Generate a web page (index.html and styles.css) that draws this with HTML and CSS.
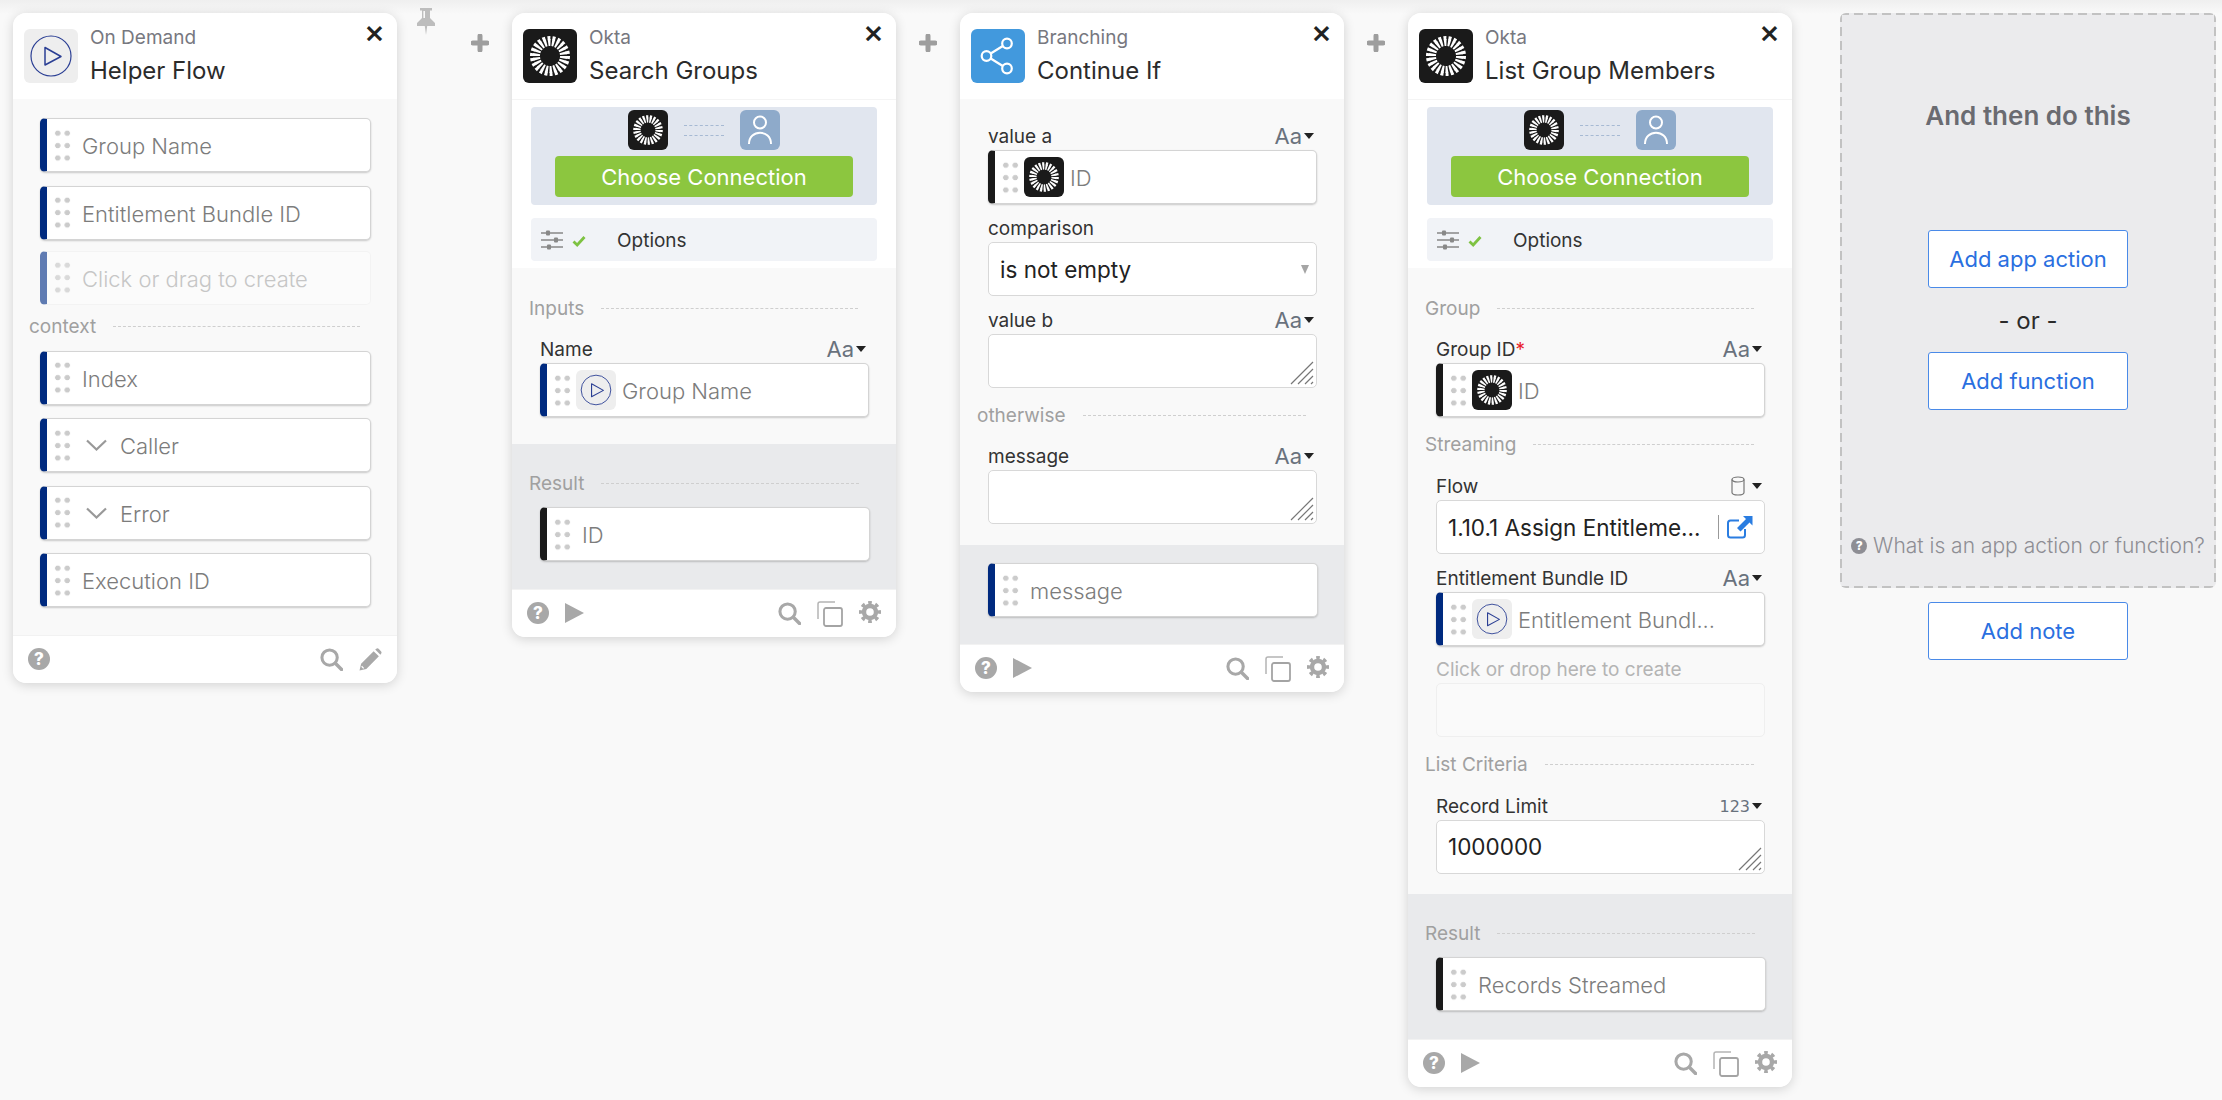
FILE: index.html
```html
<!DOCTYPE html>
<html lang="en">
<head>
  <meta charset="UTF-8">
  <meta name="viewport" content="width=device-width, initial-scale=1.0">
  <title>Helper Flow</title>
  <link rel="stylesheet" href="styles.css">
</head>
<body>
  <svg class="defs" xmlns="http://www.w3.org/2000/svg">
    <symbol id="i-play" viewBox="0 0 54 54">
      <circle cx="27" cy="27" r="20" fill="none" stroke="#2b3f94" stroke-width="1.2"/>
      <path d="M21 18.5 L37 27.5 L21 36 Z" fill="none" stroke="#2b3f94" stroke-width="1.5" stroke-linejoin="round"/>
    </symbol>
    <symbol id="i-okta" viewBox="0 0 54 54">
      <circle cx="27" cy="27" r="13.5" fill="none" stroke="#fff" stroke-width="7" pathLength="44" stroke-dasharray="1.25 .75"/>
      <circle cx="27" cy="27" r="18" fill="none" stroke="#fff" stroke-width="4" pathLength="44" stroke-dasharray="1.15 .85"/>
    </symbol>
    <symbol id="i-share" viewBox="0 0 54 54">
      <g fill="none" stroke="#fff" stroke-width="2.2">
        <circle cx="36" cy="14.5" r="4.8"/>
        <circle cx="15.5" cy="27" r="4.8"/>
        <circle cx="36" cy="39.5" r="4.8"/>
        <path d="M19.7 24.5 L31.8 17 M19.7 29.5 L31.8 37"/>
      </g>
    </symbol>
    <symbol id="i-person" viewBox="0 0 40 40">
      <g fill="none" stroke="#fff" stroke-width="2">
        <circle cx="20" cy="12.5" r="6"/>
        <path d="M9 34 C9 19 31 19 31 34"/>
      </g>
    </symbol>
    <symbol id="i-sliders" viewBox="0 0 22 20">
      <g stroke="#888" stroke-width="1.4">
        <path d="M0 3 H22 M0 10 H22 M0 17 H22"/>
      </g>
      <g fill="#888">
        <rect x="5" y="0.5" width="4" height="5" rx="1"/>
        <rect x="13" y="7.5" width="4" height="5" rx="1"/>
        <rect x="6" y="14.5" width="4" height="5" rx="1"/>
      </g>
    </symbol>
    <symbol id="i-check" viewBox="0 0 14 12">
      <path d="M1.5 6.5 L5.2 10 L12.5 2" fill="none" stroke="#7ec242" stroke-width="2.8"/>
    </symbol>
    <symbol id="i-search" viewBox="0 0 24 24">
      <circle cx="10" cy="10" r="8" fill="none" stroke="#a8a8a8" stroke-width="3.2"/>
      <path d="M16 16 L22.5 22.5" stroke="#a8a8a8" stroke-width="3.6" stroke-linecap="round"/>
    </symbol>
    <symbol id="i-pencil" viewBox="0 0 22 22">
      <path d="M0.5 21.5 L2 15 L14 3 L19 8 L7 20 Z M15.5 1.5 L17 0.5 Q18 0 19 1 L21 3 Q22 4 21.4 5 L20.5 6.5 Z" fill="#a8a8a8"/>
      <path d="M2.5 17.5 L4.5 19.5" stroke="#fff" stroke-width="1.2"/>
    </symbol>
    <symbol id="i-copy" viewBox="0 0 26 26">
      <path d="M18 1 H3 Q1 1 1 3 V18" fill="none" stroke="#b4b4b4" stroke-width="1.5"/>
      <rect x="7" y="7" width="18" height="18" rx="2" fill="none" stroke="#a4a4a4" stroke-width="1.8"/>
    </symbol>
    <symbol id="i-gear" viewBox="0 0 22 22">
      <circle cx="11" cy="11" r="6" fill="none" stroke="#a8a8a8" stroke-width="4.4"/>
      <circle cx="11" cy="11" r="9.2" fill="none" stroke="#a8a8a8" stroke-width="3.6" pathLength="16" stroke-dasharray="1 1" stroke-dashoffset=".5"/>
    </symbol>
    <symbol id="i-grip" viewBox="0 0 25 25">
      <g stroke="#777" stroke-width="1.2">
        <path d="M24 2 L2 24 M24 9 L9 24 M24 16 L16 24 M24 22 L22 24"/>
      </g>
    </symbol>
    <symbol id="i-link" viewBox="0 0 26 24">
      <path d="M18 14 V20 Q18 22.5 15.5 22.5 H3.5 Q1 22.5 1 20 V8 Q1 5.5 3.5 5.5 H12" fill="none" stroke="#2a7de1" stroke-width="2"/>
      <path d="M16 1 H25.5 V10.5 L22.5 7.5 L13.5 16.5 L10 13 L19 4 Z" fill="#2a7de1"/>
    </symbol>
    <symbol id="i-db" viewBox="0 0 14 20">
      <g fill="none" stroke="#777" stroke-width="1.2">
        <ellipse cx="7" cy="3.5" rx="6" ry="2.5"/>
        <path d="M1 3.5 V16.5 C1 18 3 19 7 19 C11 19 13 18 13 16.5 V3.5"/>
      </g>
    </symbol>
    <symbol id="i-pin" viewBox="0 0 18 27">
      <path d="M3 0 H15 V2.5 H13 V10 L18 15 V18 H10.2 L9 27 L7.8 18 H0 V15 L5 10 V2.5 H3 Z M6.4 3 V10 H8 V3 Z" fill="#bdbdbd" fill-rule="evenodd"/>
    </symbol>
    <symbol id="i-plus" viewBox="0 0 18 18">
      <path d="M9 2 V16 M2 9 H16" stroke="#9e9e9e" stroke-width="5" stroke-linecap="round"/>
    </symbol>
    <symbol id="i-chevron" viewBox="0 0 21 12">
      <path d="M1 1.5 L10.5 10.5 L20 1.5" fill="none" stroke="#999" stroke-width="2.2"/>
    </symbol>
  </svg>

  <div class="canvas">

    <!-- helper flow start card -->
    <section class="card">
      <header class="card-head">
        <span class="app-icon icon-grey"><svg><use href="#i-play"/></svg></span>
        <div class="card-title">
          <div class="app-name">On Demand</div>
          <div class="action-name">Helper Flow</div>
        </div>
        <span class="close">&times;</span>
      </header>
      <div class="card-body body-start">
        <div class="token stripe-blue"><span class="dots"></span><span class="token-name">Group Name</span></div>
        <div class="token stripe-blue"><span class="dots"></span><span class="token-name">Entitlement Bundle ID</span></div>
        <div class="token token-new"><span class="dots"></span><span class="token-name">Click or drag to create</span></div>
        <div class="section-row row-context"><span>context</span></div>
        <div class="token stripe-blue"><span class="dots"></span><span class="token-name">Index</span></div>
        <div class="token stripe-blue"><span class="dots"></span><svg class="chevron"><use href="#i-chevron"/></svg><span class="token-name">Caller</span></div>
        <div class="token stripe-blue"><span class="dots"></span><svg class="chevron"><use href="#i-chevron"/></svg><span class="token-name">Error</span></div>
        <div class="token stripe-blue"><span class="dots"></span><span class="token-name">Execution ID</span></div>
      </div>
      <footer class="card-foot">
        <span class="help">?</span>
        <span class="spacer"></span>
        <svg class="foot-icon"><use href="#i-search"/></svg>
        <svg class="foot-icon"><use href="#i-pencil"/></svg>
      </footer>
    </section>

    <div class="pin-col"><svg class="pin"><use href="#i-pin"/></svg></div>
    <div class="gutter"><svg class="plus"><use href="#i-plus"/></svg></div>

    <!-- search groups -->
    <section class="card">
      <header class="card-head">
        <span class="app-icon icon-black"><svg><use href="#i-okta"/></svg></span>
        <div class="card-title">
          <div class="app-name">Okta</div>
          <div class="action-name">Search Groups</div>
        </div>
        <span class="close">&times;</span>
      </header>
      <div class="conn-section">
        <div class="conn-box">
          <div class="conn-icons">
            <span class="app-icon small icon-black"><svg><use href="#i-okta"/></svg></span>
            <span class="conn-dash"></span>
            <span class="app-icon small icon-person"><svg><use href="#i-person"/></svg></span>
          </div>
          <button class="conn-btn">Choose Connection</button>
        </div>
        <div class="options">
          <svg class="sliders"><use href="#i-sliders"/></svg>
          <svg class="check"><use href="#i-check"/></svg>
          <span>Options</span>
        </div>
      </div>
      <div class="card-body">
        <div class="section-row first"><span>Inputs</span></div>
        <div class="field">
          <div class="field-label"><span>Name</span><span class="type">Aa</span></div>
          <div class="token stripe-blue"><span class="dots"></span><span class="app-icon small icon-grey"><svg><use href="#i-play"/></svg></span><span class="token-name">Group Name</span></div>
        </div>
      </div>
      <div class="card-result">
        <div class="section-row"><span>Result</span></div>
        <div class="token stripe-black"><span class="dots"></span><span class="token-name">ID</span></div>
      </div>
      <footer class="card-foot">
        <span class="help">?</span>
        <span class="run"></span>
        <span class="spacer"></span>
        <svg class="foot-icon"><use href="#i-search"/></svg>
        <svg class="foot-icon copy"><use href="#i-copy"/></svg>
        <svg class="foot-icon gear"><use href="#i-gear"/></svg>
      </footer>
    </section>

    <div class="gutter"><svg class="plus"><use href="#i-plus"/></svg></div>

    <!-- continue if -->
    <section class="card">
      <header class="card-head">
        <span class="app-icon icon-blue"><svg><use href="#i-share"/></svg></span>
        <div class="card-title">
          <div class="app-name">Branching</div>
          <div class="action-name">Continue If</div>
        </div>
        <span class="close">&times;</span>
      </header>
      <div class="card-body body-branch">
        <div class="field">
          <div class="field-label"><span>value a</span><span class="type">Aa</span></div>
          <div class="token stripe-black"><span class="dots"></span><span class="app-icon small icon-black"><svg><use href="#i-okta"/></svg></span><span class="token-name">ID</span></div>
        </div>
        <div class="field">
          <div class="field-label"><span>comparison</span></div>
          <div class="control select"><span>is not empty</span><span class="select-arrow"></span></div>
        </div>
        <div class="field">
          <div class="field-label"><span>value b</span><span class="type">Aa</span></div>
          <div class="control"><svg class="resize"><use href="#i-grip"/></svg></div>
        </div>
        <div class="section-row"><span>otherwise</span></div>
        <div class="field">
          <div class="field-label"><span>message</span><span class="type">Aa</span></div>
          <div class="control"><svg class="resize"><use href="#i-grip"/></svg></div>
        </div>
      </div>
      <div class="card-result result-plain">
        <div class="token stripe-blue"><span class="dots"></span><span class="token-name">message</span></div>
      </div>
      <footer class="card-foot">
        <span class="help">?</span>
        <span class="run"></span>
        <span class="spacer"></span>
        <svg class="foot-icon"><use href="#i-search"/></svg>
        <svg class="foot-icon copy"><use href="#i-copy"/></svg>
        <svg class="foot-icon gear"><use href="#i-gear"/></svg>
      </footer>
    </section>

    <div class="gutter"><svg class="plus"><use href="#i-plus"/></svg></div>

    <!-- list group members -->
    <section class="card">
      <header class="card-head">
        <span class="app-icon icon-black"><svg><use href="#i-okta"/></svg></span>
        <div class="card-title">
          <div class="app-name">Okta</div>
          <div class="action-name">List Group Members</div>
        </div>
        <span class="close">&times;</span>
      </header>
      <div class="conn-section">
        <div class="conn-box">
          <div class="conn-icons">
            <span class="app-icon small icon-black"><svg><use href="#i-okta"/></svg></span>
            <span class="conn-dash"></span>
            <span class="app-icon small icon-person"><svg><use href="#i-person"/></svg></span>
          </div>
          <button class="conn-btn">Choose Connection</button>
        </div>
        <div class="options">
          <svg class="sliders"><use href="#i-sliders"/></svg>
          <svg class="check"><use href="#i-check"/></svg>
          <span>Options</span>
        </div>
      </div>
      <div class="card-body body-list">
        <div class="section-row first"><span>Group</span></div>
        <div class="field">
          <div class="field-label"><span>Group ID<b class="req">*</b></span><span class="type">Aa</span></div>
          <div class="token stripe-black"><span class="dots"></span><span class="app-icon small icon-black"><svg><use href="#i-okta"/></svg></span><span class="token-name">ID</span></div>
        </div>
        <div class="section-row"><span>Streaming</span></div>
        <div class="field">
          <div class="field-label"><span>Flow</span><span class="type"><svg class="db"><use href="#i-db"/></svg></span></div>
          <div class="control flow-input">
            <span class="flow-name">1.10.1 Assign Entitleme...</span>
            <svg class="ext-link"><use href="#i-link"/></svg>
          </div>
        </div>
        <div class="field">
          <div class="field-label"><span>Entitlement Bundle ID</span><span class="type">Aa</span></div>
          <div class="token stripe-blue"><span class="dots"></span><span class="app-icon small icon-grey"><svg><use href="#i-play"/></svg></span><span class="token-name">Entitlement Bundl...</span></div>
        </div>
        <div class="field field-new">
          <div class="field-label label-faded"><span>Click or drop here to create</span></div>
          <div class="control control-faded"></div>
        </div>
        <div class="section-row"><span>List Criteria</span></div>
        <div class="field">
          <div class="field-label"><span>Record Limit</span><span class="type type-num">123</span></div>
          <div class="control value">1000000<svg class="resize"><use href="#i-grip"/></svg></div>
        </div>
      </div>
      <div class="card-result">
        <div class="section-row"><span>Result</span></div>
        <div class="token stripe-black"><span class="dots"></span><span class="token-name">Records Streamed</span></div>
      </div>
      <footer class="card-foot">
        <span class="help">?</span>
        <span class="run"></span>
        <span class="spacer"></span>
        <svg class="foot-icon"><use href="#i-search"/></svg>
        <svg class="foot-icon copy"><use href="#i-copy"/></svg>
        <svg class="foot-icon gear"><use href="#i-gear"/></svg>
      </footer>
    </section>

    <!-- add next step -->
    <aside class="next-col">
      <div class="next-panel">
        <h2>And then do this</h2>
        <button class="add-btn">Add app action</button>
        <div class="or">- or -</div>
        <button class="add-btn">Add function</button>
        <div class="what"><span class="help help-small">?</span>What is an app action or function?</div>
      </div>
      <button class="add-btn">Add note</button>
    </aside>
  </div>
</body>
</html>
```

FILE: styles.css
```css
body {
  font-family: Inter, "Noto Sans", sans-serif;
  margin: 0;
  padding: 0;
  background: #f9f9f9;
  color: #333;
}

.defs {
  display: none;
}

.canvas {
  display: flex;
  align-items: flex-start;
  height: 1100px;
  box-sizing: border-box;
  padding: 13px 0 0 13px;
  background: linear-gradient(#efefef, #f9f9f9 14px);
}

.card {
  width: 384px;
  flex-shrink: 0;
  background: #f9f9f9;
  border-radius: 13px;
  box-shadow: 0 2px 12px rgba(0, 0, 0, 0.16);
  overflow: hidden;
}

.card-head {
  display: flex;
  height: 86px;
  box-sizing: border-box;
  padding: 16px 0 0 11px;
  background: #fff;
  position: relative;
}

.app-icon {
  display: block;
  width: 54px;
  height: 54px;
  flex-shrink: 0;
  border-radius: 6px;
}

.app-icon svg {
  display: block;
  width: 100%;
  height: 100%;
}

.app-icon.small {
  width: 40px;
  height: 40px;
  border-radius: 6px;
}

.icon-grey { background: #eee; }
.icon-black { background: #1a1a1a; }
.icon-blue { background: #4299dd; }
.icon-person { background: #8eaaca; }

.card-title {
  margin-left: 12px;
}

.app-name {
  font-size: 19px;
  line-height: 22px;
  margin-top: -2px;
  color: #77787f;
}

.action-name {
  font-size: 24px;
  line-height: 30px;
  margin-top: 7px;
  color: #2b2b2b;
}

.close {
  position: absolute;
  top: 5px;
  right: 12px;
  font-size: 32px;
  line-height: 28px;
  font-weight: 500;
  color: #222;
}

.conn-section {
  background: #fff;
  border-top: 1px solid #f4f4f4;
  padding: 7px 19px 7px;
  height: 169px;
  box-sizing: border-box;
}

.conn-box {
  background: #e1e6ef;
  border-radius: 4px;
  height: 98px;
  box-sizing: border-box;
  padding-top: 3px;
  display: flex;
  flex-direction: column;
  align-items: center;
}

.conn-icons {
  display: flex;
  align-items: center;
  gap: 16px;
}

.conn-dash {
  width: 40px;
  height: 9px;
  border-top: 1px dashed #a6b9d3;
  border-bottom: 1px dashed #a6b9d3;
}

.conn-btn {
  margin-top: 6px;
  width: 298px;
  height: 41px;
  border: none;
  border-radius: 4px;
  background: #8cc63f;
  color: #fff;
  font-family: inherit;
  font-size: 22px;
  padding: 0;
}

.options {
  display: flex;
  align-items: center;
  height: 43px;
  margin-top: 13px;
  border-radius: 4px;
  background: #f1f3f7;
  padding-left: 10px;
  font-size: 19px;
}

.options span {
  padding-top: 2px;
}

.sliders {
  width: 22px;
  height: 20px;
}

.check {
  width: 14px;
  height: 12px;
  margin: 2px 31px 0 9px;
}

.card-body {
  padding: 0 27px 27px 28px;
}

.body-start {
  padding: 19px 26px 28px 27px;
}

.body-start .token + .token {
  margin-top: 13.5px;
}

.body-start .token + .token-new {
  margin-top: 11px;
}

.body-branch {
  padding-top: 13px;
  padding-bottom: 21px;
}

.body-list {
  padding-bottom: 20px;
}

.body-list .section-row:not(.first) {
  margin-bottom: 6px;
}

.field-new {
  margin-top: -1px;
}

.section-row {
  display: flex;
  align-items: center;
  gap: 17px;
  height: 24px;
  margin: 15px 11px 5px -11px;
  font-size: 19px;
  color: #a0a0a0;
}

.section-row::after {
  content: "";
  flex: 1;
  border-top: 1px dashed #cfcfcf;
}

.section-row.first {
  margin-top: 28px;
}

.row-context {
  margin-top: 10px;
  margin-bottom: 12px;
}

.field-label {
  display: flex;
  justify-content: space-between;
  align-items: center;
  height: 24px;
  padding: 12px 3px 2px 0;
  font-size: 19px;
  color: #333;
}

.req {
  color: #e8202a;
  font-weight: 400;
}

.label-faded {
  color: #b4b4b4;
}

.type {
  display: flex;
  align-items: center;
  font-size: 22px;
  color: #69727d;
}

.type::after {
  content: "";
  margin-left: 2px;
  border-left: 5px solid transparent;
  border-right: 5px solid transparent;
  border-top: 6px solid #222;
}

.type-num {
  font-family: "DejaVu Sans", sans-serif;
  font-size: 16px;
}

.db {
  width: 14px;
  height: 20px;
  margin-right: 5px;
}

.token {
  display: flex;
  align-items: center;
  height: 54px;
  box-sizing: border-box;
  background: #fff;
  border-radius: 5px;
  border: 1px solid #d4d4d4;
  border-left: 7px solid #002a7f;
  box-shadow: 0 1px 2px rgba(0, 0, 0, 0.2);
  padding-left: 6px;
  font-size: 22px;
  font-weight: 300;
  color: #7c7c7c;
}

.token-name {
  padding-top: 2px;
}

.stripe-blue { border-left-color: #002a7f; }
.stripe-black { border-left-color: #1a1a1a; }

.token-new {
  background: #fbfbfb;
  border-color: #f3f3f3;
  border-left-color: #5f7bb2;
  box-shadow: none;
  color: #c6c6c6;
}

.token-new .dots {
  opacity: 0.7;
}

.token .app-icon {
  margin: 0 6px 0 -6px;
}

.dots {
  width: 19px;
  height: 37px;
  flex-shrink: 0;
  margin-right: 10px;
  background: radial-gradient(circle, #cbcbcb 2.4px, transparent 3px) 0 0 / 9.5px 12.4px;
}

.chevron {
  width: 21px;
  height: 12px;
  margin: 0 13px 0 4px;
}

.control {
  position: relative;
  height: 54px;
  box-sizing: border-box;
  background: #fff;
  border: 1px solid #d8d8d8;
  border-radius: 5px;
}

.control-faded {
  background: #fafafa;
  border-color: #efefef;
}

.value, .select, .flow-name {
  font-size: 22.5px;
  color: #222;
}

.value {
  line-height: 52px;
  padding-left: 11px;
}

.select {
  display: flex;
  align-items: center;
  justify-content: space-between;
  padding: 0 7px 0 11px;
}

.select-arrow {
  border-left: 4.5px solid transparent;
  border-right: 4.5px solid transparent;
  border-top: 9px solid #a5a5a5;
}

.flow-input {
  display: flex;
  align-items: center;
  padding-left: 11px;
}

.flow-name {
  width: 262px;
  white-space: nowrap;
}

.ext-link {
  width: 26px;
  height: 24px;
  margin-left: 8px;
  padding-left: 8px;
  border-left: 1px solid #999;
}

.resize {
  position: absolute;
  right: 2px;
  bottom: 2px;
  width: 25px;
  height: 25px;
}

.card-result {
  background: #e9eaec;
  padding: 27px 26px 28px 28px;
}

.card-result .section-row {
  margin-top: 0;
  margin-bottom: 12px;
}

.result-plain {
  padding-top: 18px;
  padding-bottom: 27px;
}

.card-foot {
  display: flex;
  align-items: center;
  height: 47.5px;
  padding: 0 15px 0 15px;
  background: #fff;
  border-top: 1px solid #f2f2f2;
  box-sizing: border-box;
}

.help {
  display: block;
  width: 22px;
  height: 22px;
  border-radius: 50%;
  background: #a8a8a8;
  color: #fff;
  font-size: 17px;
  font-weight: 800;
  line-height: 22px;
  text-align: center;
}

.run {
  width: 0;
  height: 0;
  margin-left: 16px;
  border-left: 19px solid #a8a8a8;
  border-top: 10px solid transparent;
  border-bottom: 10px solid transparent;
}

.spacer {
  flex: 1;
}

.foot-icon {
  width: 23px;
  height: 23px;
  margin-left: 16px;
}

.foot-icon.copy {
  width: 26px;
  height: 26px;
  margin-top: 2px;
}

.foot-icon.gear {
  width: 22px;
  height: 22px;
  margin-top: -2px;
}

.pin-col {
  width: 51px;
  flex-shrink: 0;
}

.pin {
  display: block;
  width: 18px;
  height: 27px;
  margin: -5px 0 0 20px;
}

.gutter {
  width: 64px;
  flex-shrink: 0;
  padding-top: 21px;
  text-align: center;
}

.plus {
  width: 18px;
  height: 18px;
}

.next-col {
  width: 376px;
  margin-left: 48px;
  flex-shrink: 0;
  display: flex;
  flex-direction: column;
  align-items: center;
}

/* the panel's dashes are longer than border: dashed gives */
.next-panel {
  width: 100%;
  height: 575px;
  box-sizing: border-box;
  display: flex;
  flex-direction: column;
  align-items: center;
  background:
    linear-gradient(90deg, #c2c2c2 9px, transparent 0) 0 0 / 14px 2px repeat-x,
    linear-gradient(90deg, #c2c2c2 9px, transparent 0) 0 100% / 14px 2px repeat-x,
    linear-gradient(#c2c2c2 9px, transparent 0) 0 0 / 2px 14px repeat-y,
    linear-gradient(#c2c2c2 9px, transparent 0) 100% 0 / 2px 14px repeat-y,
    #ebebed;
  border-radius: 6px;
  margin-bottom: 14px;
}

.next-panel h2 {
  margin: 89px 0 100px;
  font-size: 26px;
  line-height: 28px;
  font-weight: 600;
  color: #6a6b71;
}

.add-btn {
  display: block;
  width: 200px;
  height: 58px;
  flex-shrink: 0;
  padding: 0;
  background: #fff;
  border: 1px solid #4a8ae8;
  border-radius: 3px;
  color: #2a6fe0;
  font-family: inherit;
  font-size: 22px;
}

.or {
  height: 64px;
  line-height: 66px;
  font-size: 24px;
  color: #2b2b2b;
}

.what {
  display: flex;
  align-items: center;
  gap: 6px;
  margin-top: auto;
  margin-bottom: 30px;
  font-size: 21px;
  font-weight: 300;
  color: #8e8e94;
  white-space: nowrap;
}

.help-small {
  width: 16px;
  height: 16px;
  line-height: 16px;
  font-size: 12px;
  background: #8e8e94;
}
```
